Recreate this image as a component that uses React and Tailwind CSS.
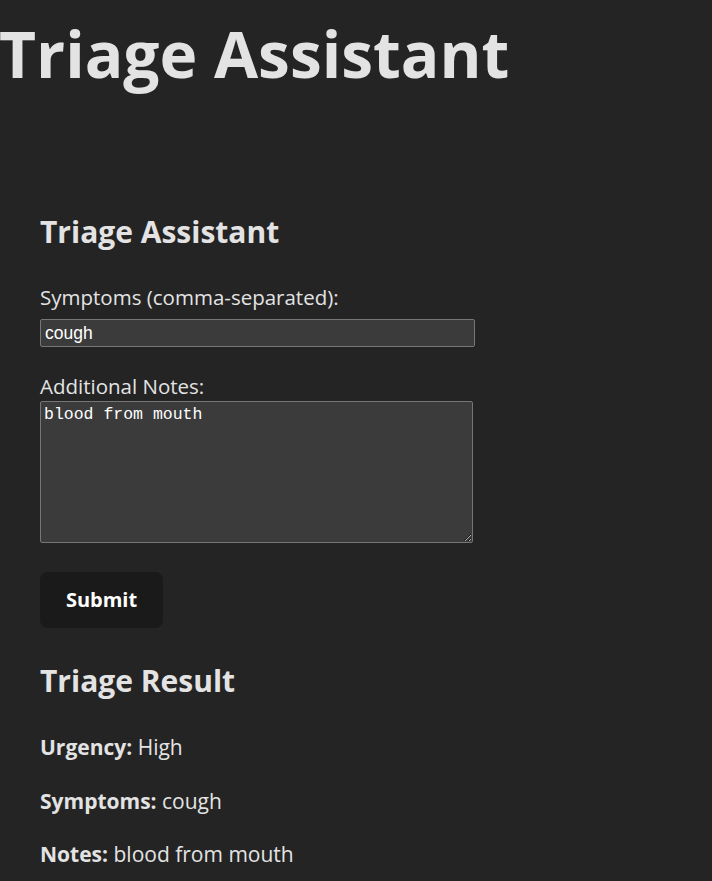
export default function App() {
  return (
    <div className="min-h-screen bg-[#242424] text-[#e3e3e3] font-['Open_Sans',sans-serif] overflow-hidden">
      <h1 className="text-[64px] font-bold leading-none mt-[22px] -ml-px whitespace-nowrap">Triage Assistant</h1>

      <div className="pl-10">
        <h2 className="text-[30px] font-bold leading-none mt-[131px]">Triage Assistant</h2>

        <form className="flex flex-col items-start">
          <label className="block text-[20.5px] leading-none mt-[40px]">Symptoms (comma-separated):</label>
          <input
            type="text"
            defaultValue="cough"
            className="mt-[11.5px] w-[435px] h-[28px] bg-[#3b3b3b] border border-[#767676] rounded-[2px] px-[4px] text-[17.5px] text-white font-['Liberation_Sans',sans-serif] outline-none"
          />

          <label className="block text-[20.5px] leading-none mt-[28.5px]">Additional Notes:</label>
          <textarea
            defaultValue="blood from mouth"
            className="mt-[5px] w-[433px] h-[142px] bg-[#3b3b3b] border border-[#767676] rounded-[2px] px-[3px] py-[3px] text-[16.5px] leading-[1.2] text-white font-['Liberation_Mono',monospace] outline-none"
          />

          <button
            type="button"
            className="mt-[29px] w-[123px] h-[56px] rounded-[8px] bg-[#1a1a1a] text-white text-[20px] font-bold"
          >
            Submit
          </button>
        </form>

        <h2 className="text-[30px] font-bold leading-none mt-[38px]">Triage Result</h2>
        <p className="text-[21px] leading-none mt-[41px]"><strong>Urgency:</strong> High</p>
        <p className="text-[21px] leading-none mt-[33px]"><strong>Symptoms:</strong> cough</p>
        <p className="text-[21px] leading-none mt-[32px]"><strong>Notes:</strong> blood from mouth</p>
      </div>
    </div>
  );
}
